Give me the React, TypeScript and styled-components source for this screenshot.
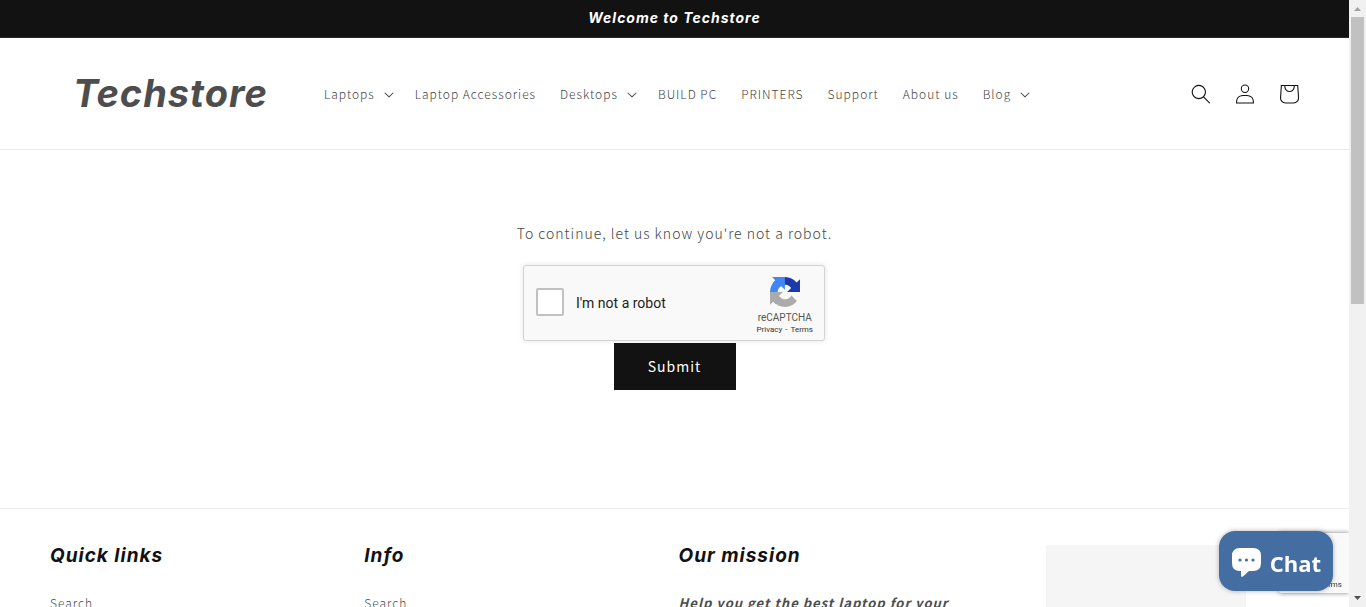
import React from "react";
import styled, { createGlobalStyle } from "styled-components";

const bodyFont = '"Noto Sans CJK SC", "Noto Sans", sans-serif';
const headingFont = 'Inter, "Open Sans", sans-serif';

const GlobalStyle = createGlobalStyle`
  *, *::before, *::after { box-sizing: border-box; }
  body {
    margin: 0;
    background: #fff;
    color: #4d4d4d;
    font-family: ${bodyFont};
    font-size: 14px;
    letter-spacing: 1px;
  }
  a { color: inherit; text-decoration: none; }
`;

const Shell = styled.div`
  height: 100vh;
  overflow: hidden;
  padding-right: 17px;
`;

const Announcement = styled.div`
  height: 38px;
  padding-bottom: 2px;
  display: flex;
  align-items: center;
  justify-content: center;
  background: #121212;
  border-bottom: 1px solid #262626;
  color: #fff;
  font: italic 700 14px/20px ${headingFont};
  letter-spacing: 1px;
`;

const Header = styled.header`
  height: 112px;
  padding: 0 38px 0 50px;
  display: flex;
  align-items: center;
  border-bottom: 1px solid #ebebeb;
`;

const Logo = styled.a`
  width: 262px;
  padding: 0 0 2px 23px;
  flex: none;
  color: #4d4d4d;
  font: italic 700 38px/44px ${headingFont};
  letter-spacing: 1px;
`;

const Menu = styled.ul`
  flex: 1;
  margin: 0;
  padding: 0;
  display: flex;
  list-style: none;
`;

const itemText = `
  padding: 12px;
  display: flex;
  align-items: center;
  gap: 9px;
  border: 0;
  background: none;
  color: #444;
  font: 300 12px/20px ${bodyFont};
  letter-spacing: 1px;
  white-space: nowrap;
`;
const MenuLink = styled.a`${itemText}`;
const MenuButton = styled.button`
  ${itemText}
  padding-right: 9px;
`;

const CaretIcon = styled.svg`
  margin-top: 2px;
`;

const HeaderIcons = styled.div`
  display: flex;
`;

const IconLink = styled.a`
  width: 44px;
  height: 44px;
  display: flex;
  align-items: center;
  justify-content: center;
  color: #121212;
`;

const Main = styled.main`
  height: 358px;
  padding-top: 69px;
  display: flex;
  flex-direction: column;
  align-items: center;
`;

const Prompt = styled.p`
  margin: 0 0 18px;
  color: #444;
  font: 300 14px/28px ${bodyFont};
  letter-spacing: 1px;
`;

const ChallengeForm = styled.form`
  display: flex;
  flex-direction: column;
  align-items: center;
`;

const Captcha = styled.div`
  width: 302px;
  height: 76px;
  margin: 0 1px 2px 0;
  padding: 0 11px 0 12px;
  display: flex;
  align-items: center;
  border: 1px solid #d3d3d3;
  border-radius: 3px;
  background: #f9f9f9;
  box-shadow: 0 0 4px 1px rgba(0, 0, 0, 0.08);
  color: #222;
  font-family: Roboto, sans-serif;
  letter-spacing: 0;
`;

const CheckLabel = styled.label`
  flex: 1;
  display: flex;
  align-items: center;
  gap: 12px;
  font-size: 14px;
  line-height: 20px;
`;

const CheckBox = styled.input`
  appearance: none;
  width: 28px;
  height: 28px;
  margin: 0 0 2px;
  border: 2px solid #c1c1c1;
  border-radius: 2px;
  background: #fff;
`;

const Brand = styled.div`
  padding-top: 6px;
  display: flex;
  flex-direction: column;
  align-items: center;
  color: #555;
  font-size: 10px;
  line-height: 12px;
`;

const BrandName = styled.span`
  margin-top: 5px;
`;

const Terms = styled.div`
  display: flex;
  gap: 3px;
  color: #333;
  font-size: 8px;
  line-height: 12px;
`;

const Submit = styled.button`
  width: 122px;
  height: 47px;
  padding: 0 0 2px;
  border: 0;
  background: #121212;
  color: #fff;
  font: 400 14px/20px ${bodyFont};
  letter-spacing: 1px;
`;

const Footer = styled.footer`
  padding: 36px 50px;
  display: grid;
  grid-template-columns: repeat(4, 1fr);
  gap: 8px;
  border-top: 1px solid #ebebeb;
`;

const Column = styled.section`
  display: flex;
  flex-direction: column;
  align-items: flex-start;
`;

const FooterTitle = styled.h2`
  margin: 0 0 24px;
  color: #121212;
  font: italic 700 19px/22px ${headingFont};
  letter-spacing: 1px;
`;

const FooterLink = styled.a`
  font: 300 12px/24px ${bodyFont};
  letter-spacing: 1px;
`;

const Mission = styled.p`
  margin: 0;
  font: italic 700 13px/24px ${bodyFont};
  letter-spacing: 1px;
`;

const Picture = styled.div`
  width: 200px;
  height: 200px;
  justify-self: center;
  background: #f5f5f5;
`;

const CaptchaBadge = styled.div`
  position: fixed;
  right: 17px;
  bottom: 14px;
  width: 70px;
  height: 60px;
  padding: 46px 7px 0 0;
  border-radius: 2px 0 0 2px;
  background: #f9f9f9;
  box-shadow: 0 0 5px gray;
  clip-path: inset(-6px 0 -6px -6px);
  color: #333;
  font: 8px/12px Roboto, sans-serif;
  letter-spacing: 0;
  text-align: right;
`;

const ChatButton = styled.button`
  position: fixed;
  right: 33px;
  bottom: 16px;
  width: 114px;
  height: 60px;
  padding: 3px 0 0 1px;
  display: flex;
  align-items: center;
  justify-content: center;
  gap: 9px;
  border: 0;
  border-radius: 16px;
  background: #446da2;
  box-shadow: 0 0 5px rgba(0, 0, 0, 0.3);
  color: #fff;
  font: 700 22px/32px "Open Sans", sans-serif;
  letter-spacing: 0;
`;

const ScrollTrack = styled.div`
  position: fixed;
  top: 0;
  right: 0;
  bottom: 0;
  width: 17px;
  display: flex;
  flex-direction: column;
  align-items: center;
  background: #f1f1f1;
`;

const ScrollArrow = styled.svg`
  width: 17px;
  height: 17px;
  flex: none;
`;

const ScrollLane = styled.div`
  flex: 1;
  width: 13px;
`;

const ScrollThumb = styled.div`
  height: 50%;
  background: #c1c1c1;
`;

const Caret = () => (
  <CaretIcon width="10" height="6" viewBox="0 0 10 6" fill="currentColor" aria-hidden="true">
    <path d="M9.354.646a.5.5 0 00-.708 0L5 4.293 1.354.646a.5.5 0 00-.708.708l4 4a.5.5 0 00.708 0l4-4a.5.5 0 000-.708z" />
  </CaretIcon>
);

const menu = [
  { label: "Laptops", children: true },
  { label: "Laptop Accessories" },
  { label: "Desktops", children: true },
  { label: "BUILD PC" },
  { label: "PRINTERS" },
  { label: "Support" },
  { label: "About us" },
  { label: "Blog", children: true },
];

export default function App() {
  return (
    <Shell>
      <GlobalStyle />
      <Announcement>Welcome to Techstore</Announcement>
      <Header>
        <Logo href="#">Techstore</Logo>
        <Menu>
          {menu.map((item) => (
            <li key={item.label}>
              {item.children ? (
                <MenuButton type="button">
                  {item.label}
                  <Caret />
                </MenuButton>
              ) : (
                <MenuLink href="#">{item.label}</MenuLink>
              )}
            </li>
          ))}
        </Menu>
        <HeaderIcons>
          <IconLink href="#" aria-label="Search">
            <svg width="20" height="20" viewBox="0 0 18 19" fill="currentColor">
              <path fillRule="evenodd" d="M11.03 11.68A5.784 5.784 0 112.85 3.5a5.784 5.784 0 018.18 8.18zm.26 1.12a6.78 6.78 0 11.72-.7l5.4 5.4a.5.5 0 11-.71.7l-5.41-5.4z" />
            </svg>
          </IconLink>
          <IconLink href="#" aria-label="Log in">
            <svg width="20" height="20" viewBox="0 0 18 19" fill="currentColor">
              <path fillRule="evenodd" d="M6 4.5a3 3 0 116 0 3 3 0 01-6 0zm3-4a4 4 0 100 8 4 4 0 000-8zm5.58 12.15c1.12.82 1.83 2.24 1.91 4.85H1.51c.08-2.6.79-4.03 1.9-4.85C4.66 11.75 6.5 11.5 9 11.5s4.35.26 5.58 1.15zM9 10.5c-2.5 0-4.65.24-6.17 1.35C1.27 12.98.5 14.93.5 18v.5h17V18c0-3.07-.77-5.02-2.33-6.15-1.52-1.1-3.67-1.35-6.17-1.35z" />
            </svg>
          </IconLink>
          <IconLink href="#" aria-label="Cart">
            <svg width="44" height="44" viewBox="0 0 40 40" fill="currentColor">
              <path fillRule="evenodd" d="M15.75 11.8h-3.16l-.77 11.6a5 5 0 0 0 4.99 5.34h7.38a5 5 0 0 0 4.99-5.33l-.78-11.61zm0 1h-2.22l-.71 10.67a4 4 0 0 0 3.99 4.27h7.38a4 4 0 0 0 4-4.27l-.72-10.67h-2.22v.63a4.75 4.75 0 1 1-9.5 0zm8.5 0h-7.5v.63a3.75 3.75 0 1 0 7.5 0z" />
            </svg>
          </IconLink>
        </HeaderIcons>
      </Header>
      <Main>
        <Prompt>To continue, let us know you're not a robot.</Prompt>
        <ChallengeForm>
          <Captcha>
            <CheckLabel>
              <CheckBox type="checkbox" />
              I'm not a robot
            </CheckLabel>
            <Brand>
              <svg width="30" height="30" viewBox="0 0 64 64" aria-hidden="true">
                <path fill="#1c3aa9" d="M64 31.955l-.033-1.37V4.687l-7.16 7.16C50.948 4.674 42.033.093 32.05.093c-10.4 0-19.622 4.96-25.458 12.64l11.736 11.86a15.55 15.55 0 0 1 4.754-5.334c2.05-1.6 4.952-2.906 8.968-2.906.485 0 .86.057 1.135.163 4.976.393 9.288 3.14 11.828 7.124l-8.307 8.307L64 31.953" />
                <path fill="#4285f4" d="M31.862.094l-1.37.033H4.594l7.16 7.16C4.58 13.147 0 22.06 0 32.046c0 10.4 4.96 19.622 12.64 25.458L24.5 45.768a15.55 15.55 0 0 1-5.334-4.754c-1.6-2.05-2.906-4.952-2.906-8.968 0-.485.057-.86.163-1.135.393-4.976 3.14-9.288 7.124-11.828l8.307 8.307L31.86.095" />
                <path fill="#ababab" d="M.001 32.045l.033 1.37v25.898l7.16-7.16c5.86 7.173 14.774 11.754 24.76 11.754 10.4 0 19.622-4.96 25.458-12.64l-11.736-11.86a15.55 15.55 0 0 1-4.754 5.334c-2.05 1.6-4.952 2.906-8.968 2.906-.485 0-.86-.057-1.135-.163-4.976-.393-9.288-3.14-11.828-7.124l8.307-8.307c-10.522.04-22.4.066-27.295-.005" />
              </svg>
              <BrandName>reCAPTCHA</BrandName>
              <Terms>
                <a href="#">Privacy</a>
                <span>-</span>
                <a href="#">Terms</a>
              </Terms>
            </Brand>
          </Captcha>
          <Submit type="submit">Submit</Submit>
        </ChallengeForm>
      </Main>
      <Footer>
        <Column>
          <FooterTitle>Quick links</FooterTitle>
          <FooterLink href="#">Search</FooterLink>
        </Column>
        <Column>
          <FooterTitle>Info</FooterTitle>
          <FooterLink href="#">Search</FooterLink>
        </Column>
        <Column>
          <FooterTitle>Our mission</FooterTitle>
          <Mission>Help you get the best laptop for your</Mission>
        </Column>
        <Picture />
      </Footer>
      <CaptchaBadge>rms</CaptchaBadge>
      <ChatButton type="button">
        <svg width="29" height="29" viewBox="0 0 29 29" aria-hidden="true">
          <path fill="#fff" d="M8 0h13q8 0 8 8v7q0 8-8 8h-4l-6 5.500q-2 1-2-1V23H8q-8 0-8-8V8q0-8 8-8z" />
          <g fill="#446da2">
            <circle cx="8" cy="12" r="1.600" />
            <circle cx="14.500" cy="12" r="1.600" />
            <circle cx="21" cy="12" r="1.600" />
          </g>
        </svg>
        Chat
      </ChatButton>
      <ScrollTrack aria-hidden="true">
        <ScrollArrow viewBox="0 0 17 17"><path fill="#a3a3a3" d="M5 11h7L8.500 7z" /></ScrollArrow>
        <ScrollLane><ScrollThumb /></ScrollLane>
        <ScrollArrow viewBox="0 0 17 17"><path fill="#505050" d="M5 6h7L8.500 10z" /></ScrollArrow>
      </ScrollTrack>
    </Shell>
  );
}
